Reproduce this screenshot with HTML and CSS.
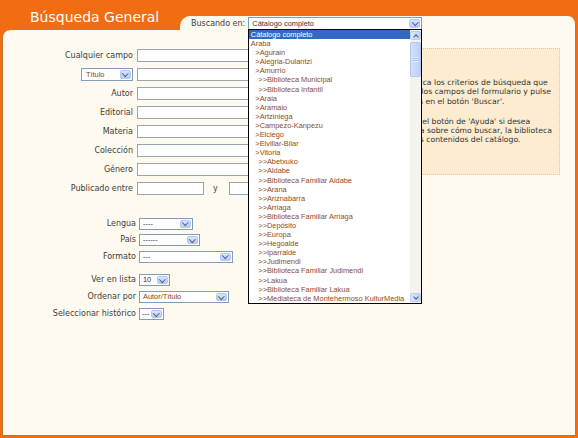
FILE: index.html
```html
<!DOCTYPE html>
<html lang="es">
<head>
<meta charset="utf-8">
<title>Búsqueda General</title>
<link rel="stylesheet" href="styles.css">
</head>
<body>
<div class="frame">
  <div class="head">
    <div class="tab"><h1 class="title">Búsqueda General</h1></div>
    <div class="head-fill">
      <span class="scope-label">Buscando en:</span>
      <div class="combo combo-scope">
        <div class="select s-scope">
          <span class="select-value">Cátalogo completo</span>
          <span class="arrow"></span>
        </div>
        <div class="listbox">
          <ul class="options">
            <li class="opt selected">Cátalogo completo</li>
            <li class="opt">Araba</li>
            <li class="opt l1">&gt;Agurain</li>
            <li class="opt l1">&gt;Alegria-Dulantzi</li>
            <li class="opt l1">&gt;Amurrio</li>
            <li class="opt l2">&gt;&gt;Biblioteca Municipal</li>
            <li class="opt l2">&gt;&gt;Biblioteca Infantil</li>
            <li class="opt l1">&gt;Araia</li>
            <li class="opt l1">&gt;Aramaio</li>
            <li class="opt l1">&gt;Artziniega</li>
            <li class="opt l1">&gt;Campezo-Kanpezu</li>
            <li class="opt l1">&gt;Elciego</li>
            <li class="opt l1">&gt;Elvillar-Bilar</li>
            <li class="opt l1">&gt;Vitoria</li>
            <li class="opt l2">&gt;&gt;Abetxuko</li>
            <li class="opt l2">&gt;&gt;Aldabe</li>
            <li class="opt l2">&gt;&gt;Biblioteca Familiar Aldabe</li>
            <li class="opt l2">&gt;&gt;Arana</li>
            <li class="opt l2">&gt;&gt;Ariznabarra</li>
            <li class="opt l2">&gt;&gt;Arriaga</li>
            <li class="opt l2">&gt;&gt;Biblioteca Familiar Arriaga</li>
            <li class="opt l2">&gt;&gt;Depósito</li>
            <li class="opt l2">&gt;&gt;Europa</li>
            <li class="opt l2">&gt;&gt;Hegoalde</li>
            <li class="opt l2">&gt;&gt;Iparralde</li>
            <li class="opt l2">&gt;&gt;Judimendi</li>
            <li class="opt l2">&gt;&gt;Biblioteca Familiar Judimendi</li>
            <li class="opt l2">&gt;&gt;Lakua</li>
            <li class="opt l2">&gt;&gt;Biblioteca Familiar Lakua</li>
            <li class="opt l2">&gt;&gt;Mediateca de Montehermoso KulturMedia</li>
          </ul>
          <div class="scrollbar">
            <span class="sb-btn up"></span>
            <span class="sb-thumb"></span>
            <span class="sb-track"></span>
            <span class="sb-btn down"></span>
          </div>
        </div>
      </div>
    </div>
  </div>

  <div class="body">
    <form class="form">
      <div class="fields">
        <label class="lbl">Cualquier campo</label>
        <input class="text wide" type="text">

        <div class="lbl">
          <div class="select s-titulo"><span class="select-value red">Título</span><span class="arrow"></span></div>
        </div>
        <input class="text wide" type="text">

        <label class="lbl">Autor</label>
        <input class="text wide" type="text">

        <label class="lbl">Editorial</label>
        <input class="text wide" type="text">

        <label class="lbl">Materia</label>
        <input class="text wide" type="text">

        <label class="lbl">Colección</label>
        <input class="text wide" type="text">

        <label class="lbl">Género</label>
        <input class="text wide" type="text">

        <label class="lbl">Publicado entre</label>
        <div class="pair">
          <input class="text short" type="text">
          <span class="and">y</span>
          <input class="text short" type="text">
        </div>
      </div>

      <div class="filters">
        <span class="lbl">Lengua</span>
        <div class="select s-lengua"><span class="select-value">----</span><span class="arrow"></span></div>

        <span class="lbl">País</span>
        <div class="select s-pais"><span class="select-value">------</span><span class="arrow"></span></div>

        <span class="lbl">Formato</span>
        <div class="select s-formato"><span class="select-value">---</span><span class="arrow"></span></div>
      </div>

      <div class="filters options-group">
        <span class="lbl">Ver en lista</span>
        <div class="select s-ver"><span class="select-value">10</span><span class="arrow"></span></div>

        <span class="lbl">Ordenar por</span>
        <div class="select s-orden"><span class="select-value red">Autor/Título</span><span class="arrow"></span></div>

        <span class="lbl">Seleccionar histórico</span>
        <div class="select s-hist"><span class="select-value">---</span><span class="arrow"></span></div>
      </div>
    </form>

    <div class="info">
      <p>Introduzca los criterios de búsqueda que<br>elija en los campos del formulario y pulse<br>después en el botón 'Buscar'.</p>
      <p>Emplee el botón de 'Ayuda' si desea<br>una guía sobre cómo buscar, la biblioteca<br>y demás contenidos del catálogo.</p>
    </div>
  </div>
</div>
</body>
</html>
```

FILE: styles.css
```css
* { box-sizing: border-box; }

html, body {
  margin: 0;
  padding: 0;
}

body {
  width: 578px;
  height: 438px;
  overflow: hidden;
  background: #f26c12;
  font-family: "DejaVu Sans", Verdana, sans-serif;
}

.frame {
  width: 578px;
  height: 438px;
  background: #f26c12;
  padding: 0 2px 2px;
  display: flex;
  flex-direction: column;
}

/* ---------- header ---------- */
.head {
  display: flex;
  height: 30px;
  flex: none;
}

.tab {
  width: 178px;
  flex: none;
  padding: 9px 0 0 28px;
}

.title {
  margin: 0;
  font-weight: normal;
  font-size: 14px;
  line-height: 16px;
  color: #ffffff;
  white-space: nowrap;
}

.head-fill {
  flex: 1;
  margin-top: 16px;
  background: #fffaef;
  border-right: 1px solid #b87838;
  border-top-left-radius: 10px;
  border-top-right-radius: 8px;
  display: flex;
  align-items: flex-start;
  gap: 3px;
  padding: 1px 0 0 11px;
  position: relative;
  z-index: 2;
}

.scope-label {
  font-size: 8px;
  line-height: 13px;
  color: #3c3c3c;
  white-space: nowrap;
}

.combo {
  position: relative;
}

/* ---------- XP-like select ---------- */
.select {
  display: flex;
  align-items: stretch;
  height: 12px;
  border: 1px solid #7f9db9;
  background: #ffffff;
}

.select-value {
  flex: 1;
  padding-left: 3px;
  font-family: "Liberation Sans", Arial, sans-serif;
  font-size: 7.4px;
  line-height: 10px;
  color: #333333;
  white-space: nowrap;
  overflow: hidden;
}

.select-value.red { color: #8b3a17; }

.arrow {
  flex: none;
  width: 11px;
  margin: 1px 1px 1px 0;
  background: linear-gradient(#d9e4fd, #b9cbf6);
  border: 1px solid #b3c6ef;
  border-radius: 2px;
  display: flex;
  align-items: center;
  justify-content: center;
}

.arrow::after {
  content: "";
  width: 3.5px;
  height: 3.5px;
  border: solid #4a5f8c;
  border-width: 0 1.6px 1.6px 0;
  transform: translateY(-1px) rotate(45deg);
}

.s-scope { width: 174px; height: 13px; }
.s-scope .select-value { line-height: 11px; padding-left: 3px; }
.s-titulo { width: 52px; height: 13px; }
.s-titulo .select-value { line-height: 11px; padding-left: 4px; }
.s-lengua { width: 54px; }
.s-pais { width: 61px; }
.s-formato { width: 94px; }
.s-ver { width: 31px; }
.s-orden { width: 90px; }
.s-hist { width: 25px; }
.s-hist .select-value { padding-left: 2px; }

/* ---------- open list ---------- */
.listbox {
  position: absolute;
  top: 12px;
  left: 0;
  width: 174px;
  height: 275px;
  border: 1px solid #000000;
  background: #ffffff;
  display: flex;
  z-index: 5;
}

.options {
  flex: 1;
  margin: 0;
  padding: 0;
  list-style: none;
  overflow: hidden;
}

.opt {
  height: 9.1px;
  line-height: 9.1px;
  padding-left: 1.5px;
  font-family: "Liberation Sans", Arial, sans-serif;
  font-size: 7.4px;
  color: #8f4a1c;
  white-space: nowrap;
  overflow: hidden;
}

.opt.l1 { padding-left: 6px; }
.opt.l2 { padding-left: 9px; }

.opt.selected {
  background: #316ac5;
  color: #ffffff;
}

.scrollbar {
  flex: none;
  width: 11px;
  display: flex;
  flex-direction: column;
  padding: 1px 0;
  background: #f4f3ee;
}

.sb-btn {
  flex: none;
  height: 9px;
  background: linear-gradient(90deg, #dde7fe, #c2d3fa);
  border: 1px solid #bccdf3;
  border-radius: 2px;
  display: flex;
  align-items: center;
  justify-content: center;
}

.sb-btn::after {
  content: "";
  width: 3px;
  height: 3px;
  border: solid #4a5f8c;
  border-width: 0 1.5px 1.5px 0;
}

.sb-btn.up::after { transform: translateY(1px) rotate(-135deg); }
.sb-btn.down::after { transform: translateY(-1px) rotate(45deg); }

.sb-thumb {
  flex: none;
  height: 35px;
  margin-top: 1.7px;
  background: linear-gradient(90deg, #d3dffd, #bccff9);
  border: 1px solid #b3c6f0;
  border-radius: 2px;
  display: flex;
  align-items: center;
  justify-content: center;
}

.sb-thumb::after {
  content: "";
  width: 5px;
  height: 5px;
  background: repeating-linear-gradient(#eef3ff 0 1px, #9fb5e6 1px 2px);
}

.sb-track { flex: 1; }

/* ---------- body ---------- */
.body {
  flex: 1;
  background: #fffaef;
  border: 1px solid #b87838;
  border-top: 0;
  border-top-left-radius: 8px;
  display: flex;
  align-items: flex-start;
}

.form {
  flex: none;
  width: 340px;
  margin: 0;
  padding-top: 19px;
}

.lbl {
  justify-self: end;
  font-size: 8px;
  line-height: 13px;
  color: #3c3c3c;
  white-space: nowrap;
}

.fields {
  display: grid;
  grid-template-columns: 130px auto;
  column-gap: 4px;
  row-gap: 6px;
  align-items: center;
  justify-items: start;
}

.text {
  display: block;
  height: 13px;
  margin: 0;
  padding: 0 2px;
  border: 1px solid #9ba5b0;
  background: #ffffff;
  font: inherit;
  font-size: 8px;
}

.text.wide { width: 160px; }
.text.short { width: 67px; }

.pair {
  display: flex;
  align-items: center;
}

.and {
  margin: 0 11px 0 9px;
  font-size: 8px;
  line-height: 13px;
  color: #3c3c3c;
}

.filters {
  display: grid;
  grid-template-columns: 133px auto;
  column-gap: 3px;
  row-gap: 4.5px;
  align-items: center;
  justify-items: start;
  margin-top: 22.5px;
}

.filters .lbl { line-height: 12px; }

.filters.options-group {
  margin-top: 11.5px;
  row-gap: 5px;
}

/* ---------- help box ---------- */
.info {
  flex: none;
  width: 179px;
  margin: 18px 15px 0 auto;
  padding: 29px 0 30px 9px;
  background: #fdecd0;
  border: 1px dotted #efc48c;
  font-size: 7.7px;
  line-height: 9.3px;
  color: #333333;
  white-space: nowrap;
}

.info p { margin: 0 0 10.7px; }
.info p:last-child { margin-bottom: 0; }
```
